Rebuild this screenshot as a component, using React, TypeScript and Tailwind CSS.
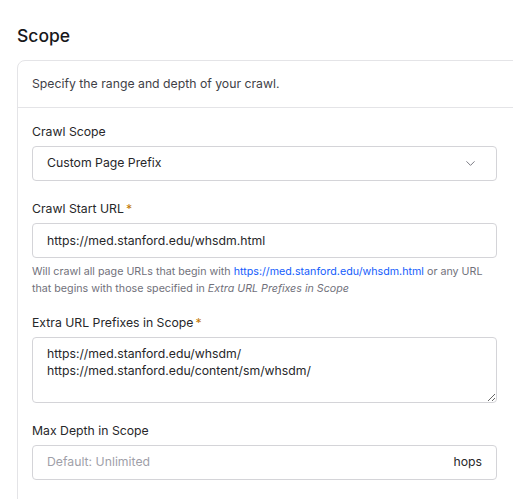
import { ChevronDown } from "lucide-react";

const font = { fontFamily: "Inter, 'Noto Sans', sans-serif" };

function Label({ text, required }: { text: string; required?: boolean }) {
  return (
    <label className="block text-[12.25px] leading-5 text-zinc-800 mb-[4px]">
      {text}
      {required && <span className="text-[#c27803] ml-[2px]">*</span>}
    </label>
  );
}

export default function App() {
  return (
    <div className="min-h-screen overflow-hidden bg-white text-zinc-900" style={font}>
      <div className="pt-[22px] pl-[17px]">
        <h2 className="text-[17.5px] leading-7 font-medium text-zinc-900 mb-[10px]">Scope</h2>

        <section className="w-[530px] border border-zinc-200 rounded-lg">
          <div className="px-[14px] pt-[13px] pb-[13px] border-b border-zinc-200">
            <p className="text-[12.25px] leading-5 text-zinc-700">
              Specify the range and depth of your crawl.
            </p>
          </div>

          <div className="w-[495px] pl-[14px] pt-[14px] pb-10 flex flex-col">
            {/* Crawl Scope */}
            <div>
              <Label text="Crawl Scope" />
              <button className="w-[465px] h-[35px] flex items-center justify-between pl-[14px] pr-[18px] border border-zinc-300 rounded text-[12.25px] text-zinc-800 bg-white">
                <span>Custom Page Prefix</span>
                <ChevronDown size={15} strokeWidth={1.5} className="text-zinc-500" />
              </button>
            </div>

            {/* Crawl Start URL */}
            <div className="mt-[18px]">
              <Label text="Crawl Start URL" required />
              <input
                className="w-[465px] h-[35px] px-[14px] border border-zinc-300 rounded text-[12.25px] text-zinc-800 outline-none"
                defaultValue="https://med.stanford.edu/whsdm.html"
              />
              <p className="mt-[6px] text-[10.7px] leading-[16.5px] text-zinc-500 w-[465px]">
                Will crawl all page URLs that begin with{" "}
                <a className="text-blue-600" href="#">
                  https://med.stanford.edu/whsdm.html
                </a>{" "}
                or any URL that begins with those specified in{" "}
                <em>Extra URL Prefixes in Scope</em>
              </p>
            </div>

            {/* Extra URL Prefixes */}
            <div className="mt-[16px]">
              <Label text="Extra URL Prefixes in Scope" required />
              <textarea
                className="block w-[465px] h-[66px] px-[14px] pt-[7px] border border-zinc-300 rounded text-[12.25px] leading-[17px] text-zinc-800 outline-none"
                defaultValue={"https://med.stanford.edu/whsdm/\nhttps://med.stanford.edu/content/sm/whsdm/"}
              />
            </div>

            {/* Max Depth */}
            <div className="mt-[18px]">
              <Label text="Max Depth in Scope" />
              <div className="w-[465px] h-[35px] flex items-center pl-[14px] pr-[14px] border border-zinc-300 rounded">
                <input
                  className="flex-1 text-[12.25px] text-zinc-800 placeholder:text-zinc-400 outline-none bg-transparent"
                  placeholder="Default: Unlimited"
                />
                <span className="text-[12.25px] text-zinc-800">hops</span>
              </div>
            </div>
          </div>
        </section>
      </div>
    </div>
  );
}
